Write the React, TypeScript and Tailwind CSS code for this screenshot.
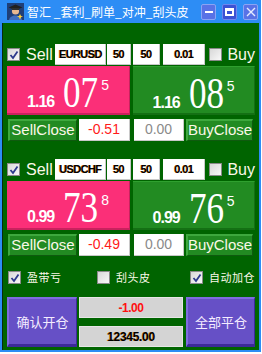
import React from 'react';

type Quote = {
  symbol: string;
  lot1: string;
  lot2: string;
  step: string;
  sell: { big: string; digits: string; pip: string };
  buy: { big: string; digits: string; pip: string };
  sellProfit: string;
  buyProfit: string;
};

const quotes: Quote[] = [
  {
    symbol: 'EURUSD',
    lot1: '50',
    lot2: '50',
    step: '0.01',
    sell: { big: '1.16', digits: '07', pip: '5' },
    buy: { big: '1.16', digits: '08', pip: '5' },
    sellProfit: '-0.51',
    buyProfit: '0.00',
  },
  {
    symbol: 'USDCHF',
    lot1: '50',
    lot2: '50',
    step: '0.01',
    sell: { big: '0.99', digits: '73', pip: '8' },
    buy: { big: '0.99', digits: '76', pip: '5' },
    sellProfit: '-0.49',
    buyProfit: '0.00',
  },
];

const sans = "font-['Liberation_Sans',Arial,sans-serif]";
const cjk = "font-['Noto_Sans_CJK_SC','Liberation_Sans',sans-serif]";

function CheckBox({ checked }: { checked: boolean }) {
  return (
    <span className="flex h-[13px] w-[13px] shrink-0 items-center justify-center border border-[#8a8a8a] bg-gradient-to-br from-[#d8d8d8] to-[#f8f8f8]">
      {checked ? (
        <svg width="10" height="10" viewBox="0 0 10 10">
          <path d="M1.5 5 L4 8 L8.5 1.5" fill="none" stroke="#2d3a8c" strokeWidth="1.8" />
        </svg>
      ) : null}
    </span>
  );
}

function InputBox({ value, className }: { value: string; className: string }) {
  return (
    <div className={`flex h-[21px] items-center justify-center border-b border-r border-[#c8c8c8] bg-white text-[11px] font-bold tracking-[-0.6px] text-black [text-shadow:-0.6px_0_0_#d87a1a] ${sans} ${className}`}>
      {value}
    </div>
  );
}

function Price({ big, digits, pip }: { big: string; digits: string; pip: string }) {
  return (
    <div className="flex items-baseline justify-center pt-[4px] text-white">
      <span className={`text-[16px] font-bold tracking-[-1px] ${sans}`}>{big}</span>
      <span className="ml-[9px] inline-block w-[35px] whitespace-nowrap font-['Liberation_Serif',serif] text-[45px] leading-none [transform-origin:left] [transform:scaleX(0.78)]">
        {digits}
      </span>
      <span className={`relative -top-[17px] ml-[3px] text-[14px] ${sans}`}>{pip}</span>
    </div>
  );
}

function QuoteBlock({ q }: { q: Quote }) {
  return (
    <div className="flex flex-col">
      <div className="flex h-[21px] items-center">
        <CheckBox checked />
        <span className={`ml-[6px] w-[30px] text-[16px] leading-none text-[#fbf8e8] ${sans}`}>Sell</span>
        <InputBox value={q.symbol} className="w-[52px]" />
        <InputBox value={q.lot1} className="ml-[1px] w-[24px]" />
        <InputBox value={q.lot2} className="ml-[2px] w-[28px]" />
        <InputBox value={q.step} className="ml-[3px] w-[43px]" />
        <span className="ml-[4px]">
          <CheckBox checked={false} />
        </span>
        <span className={`ml-[5px] text-[16px] leading-none text-[#fbf8e8] ${sans}`}>Buy</span>
      </div>
      <div className="mt-[1px] flex h-[49px] gap-[3px]">
        <div className="w-[123px] border-b-2 border-r border-[#c8225e] bg-[#fb2f78]">
          <Price {...q.sell} />
        </div>
        <div className="w-[122px] border-b-2 border-r border-t border-b-[#147014] border-r-[#147014] border-t-[#2fa02f] bg-[#228b22]">
          <Price {...q.buy} />
        </div>
      </div>
      <div className={`mt-[4px] flex h-[22px] items-stretch text-[15px] ${sans}`}>
        <div className="ml-[1px] flex w-[69px] items-center justify-center border-l-2 border-t-2 border-b border-r border-b-[#0f5a0f] border-l-[#3ea83e] border-r-[#0f5a0f] border-t-[#3ea83e] bg-[#228b22] text-[#fbf8e8]">
          SellClose
        </div>
        <div className="ml-[2px] flex w-[51px] items-center justify-center border-b border-r border-[#c8c8c8] bg-white text-[14px] text-[#ff1a1a]">
          {q.sellProfit}
        </div>
        <div className="ml-[4px] flex w-[50px] items-center justify-center border-b border-r border-[#c8c8c8] bg-white text-[14px] text-[#8a8a8a]">
          {q.buyProfit}
        </div>
        <div className="ml-[2px] flex w-[67px] items-center justify-center border-l-2 border-t-2 border-b border-r border-b-[#0f5a0f] border-l-[#3ea83e] border-r-[#0f5a0f] border-t-[#3ea83e] bg-[#228b22] text-[#fbf8e8]">
          BuyClose
        </div>
      </div>
    </div>
  );
}

function AppIcon() {
  return (
    <svg width="17" height="17" viewBox="0 0 17 17">
      <rect width="17" height="17" fill="#1f3f78" />
      <path d="M2 17 C3 11 14 11 15 17 Z" fill="#3f6fc0" />
      <circle cx="8.5" cy="8" r="3.6" fill="#e8b890" />
      <path d="M1.5 4.5 L8.5 1.5 L15.5 4.5 L8.5 7 Z" fill="#202020" />
      <rect x="5" y="5" width="7" height="2" fill="#303030" />
      <path d="M13 11 L14 13 L16 13.5 L14 14.2 L13 16.5 L12 14.2 L10 13.5 L12 13 Z" fill="#ffd23a" />
    </svg>
  );
}

export default function App() {
  return (
    <div className="h-[354px] w-[262px] bg-white">
      <div className="flex h-[352px] w-[261px] flex-col bg-[#2d8df5]">
        <div className="flex h-[23px] shrink-0 items-center pl-[7px] pr-[3px]">
          <AppIcon />
          <span className={`ml-[3px] whitespace-nowrap text-[12px] leading-none text-white ${cjk}`}>智汇 _套利_刷单_对冲_刮头皮</span>
          <div className="ml-auto flex gap-[6px]">
            <div className="flex h-[16px] w-[15px] items-center justify-center rounded-[2px] border border-[#8aa4f4] bg-[#5872e6]">
              <span className="h-[2px] w-[8px] bg-white" />
            </div>
            <div className="flex h-[16px] w-[15px] items-center justify-center rounded-[2px] border border-[#6f86ee] bg-[#3b52d4]">
              <span className="h-[8px] w-[9px] border-2 border-t-[3px] border-white" />
            </div>
            <div className="flex h-[16px] w-[15px] items-center justify-center rounded-[2px] border border-[#8aa4f4] bg-[#5872e6]">
              <svg width="10" height="10" viewBox="0 0 10 10">
                <path d="M1 1 L9 9 M9 1 L1 9" stroke="#e6ecff" strokeWidth="1.4" />
              </svg>
            </div>
          </div>
        </div>
        <div className="mx-[2px] mb-[2px] flex flex-1 flex-col border-l border-[#0a2a10] bg-[#006400] px-[4px] pt-[21px]">
          <QuoteBlock q={quotes[0]} />
          <div className="mt-[18px]">
            <QuoteBlock q={quotes[1]} />
          </div>
          <div className={`mt-[15px] flex h-[13px] items-center whitespace-nowrap text-[11px] leading-none tracking-[0.5px] text-[#fbf8e8] ${cjk}`}>
            <div className="ml-[1px] flex w-[89px] items-center">
              <CheckBox checked />
              <span className="ml-[6px]">盈带亏</span>
            </div>
            <div className="flex w-[93px] items-center">
              <CheckBox checked={false} />
              <span className="ml-[6px]">刮头皮</span>
            </div>
            <div className="flex items-center">
              <CheckBox checked />
              <span className="ml-[6px]">自动加仓</span>
            </div>
          </div>
          <div className={`mt-[13px] flex h-[50px] ${cjk}`}>
            <div className="flex w-[70px] items-center justify-center border-b-[3px] border-l-2 border-r border-t-2 border-b-[#3c2a9a] border-l-[#7f6ce0] border-r-[#3c2a9a] border-t-[#7f6ce0] bg-[#6650c6] text-[13px] text-[#f4ecff]">
              确认开仓
            </div>
            <div className={`ml-[2px] flex w-[104px] flex-col justify-between ${sans}`}>
              <div className="flex h-[21px] items-center justify-center border border-[#e6e6e6] bg-[#d4d4d4] text-[12px] font-bold tracking-[-0.5px] text-[#ff1010]">
                -1.00
              </div>
              <div className="flex h-[21px] items-center justify-center border border-[#e6e6e6] bg-[#d4d4d4] text-[12px] font-bold tracking-[-0.3px] text-black [text-shadow:-0.6px_0_0_#c8801a]">
                12345.00
              </div>
            </div>
            <div className="ml-[3px] flex w-[69px] items-center justify-center border-b-[3px] border-l-2 border-r border-t-2 border-b-[#3c2a9a] border-l-[#7f6ce0] border-r-[#3c2a9a] border-t-[#7f6ce0] bg-[#6650c6] text-[13px] text-[#f4ecff]">
              全部平仓
            </div>
          </div>
        </div>
      </div>
    </div>
  );
}
